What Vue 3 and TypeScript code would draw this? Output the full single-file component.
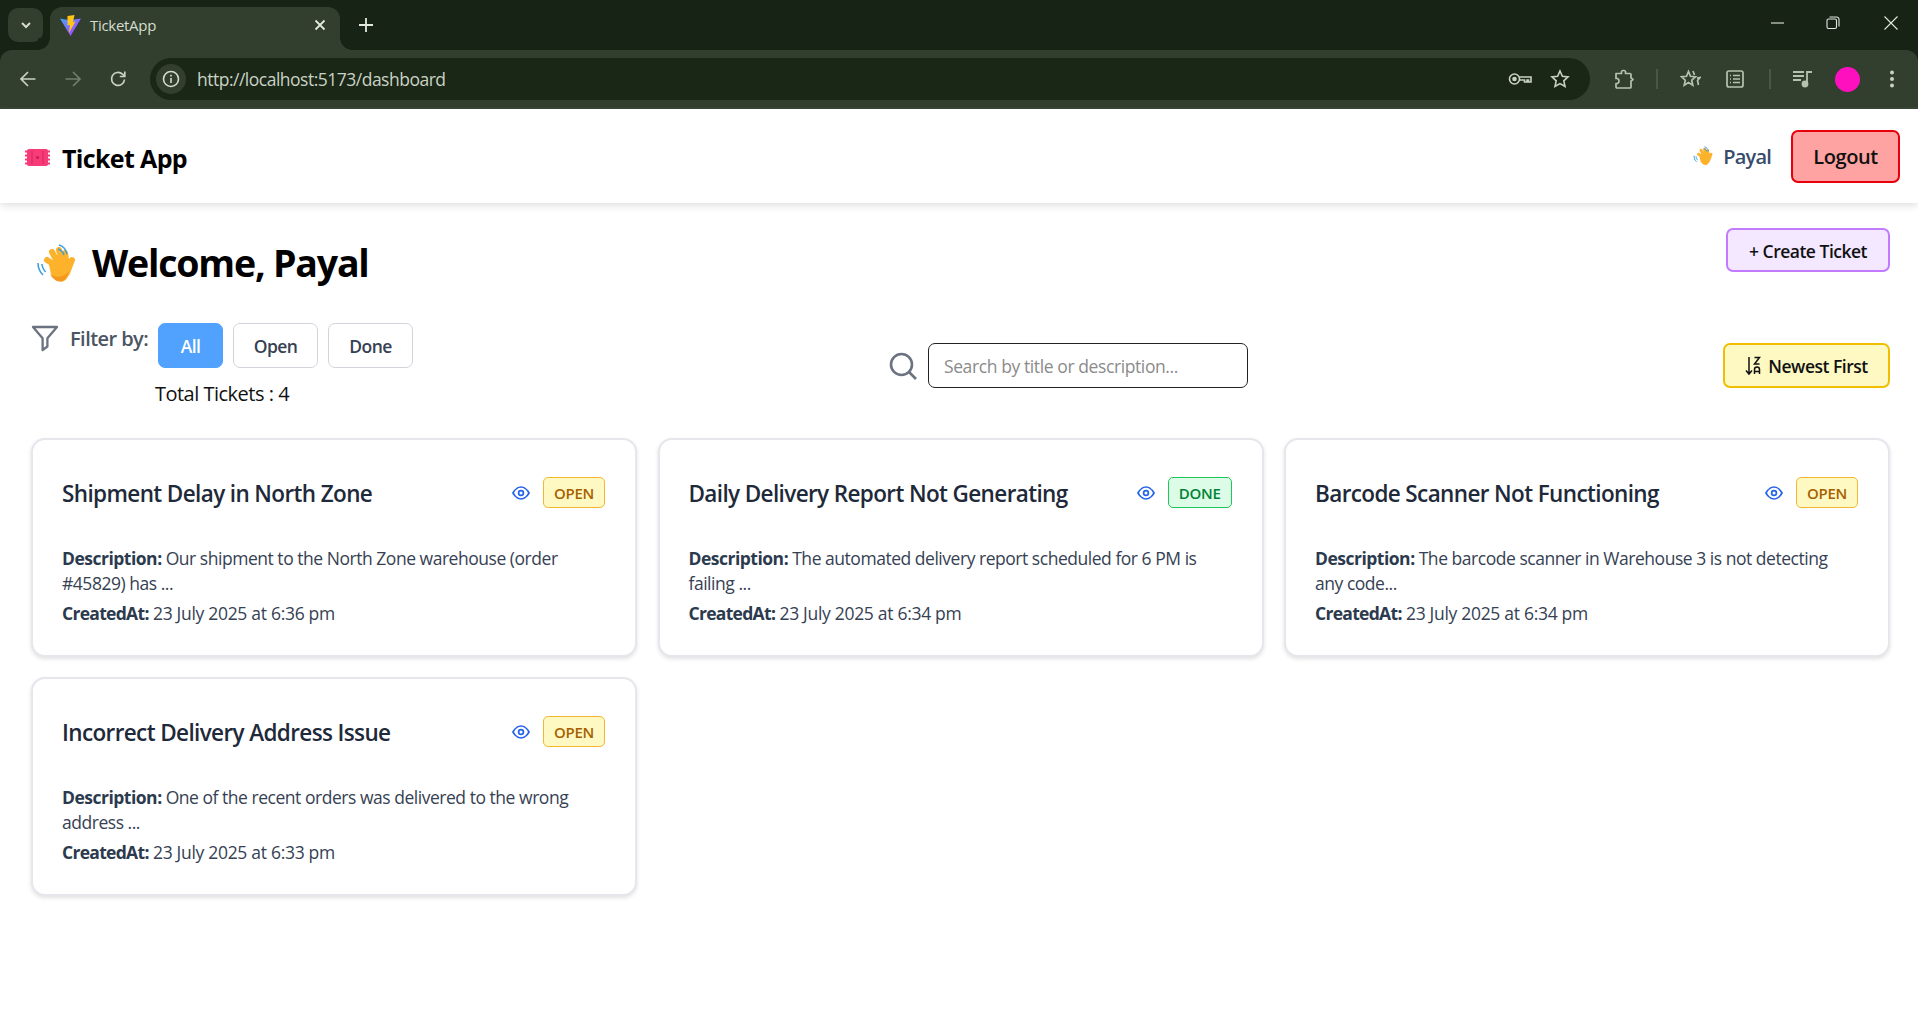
<script setup lang="ts">
interface Ticket {
  title: string
  status: 'OPEN' | 'DONE'
  description: string
  createdAt: string
}

const tickets: Ticket[] = [
  {
    title: 'Shipment Delay in North Zone',
    status: 'OPEN',
    description: 'Our shipment to the North Zone warehouse (order #45829) has ...',
    createdAt: '23 July 2025 at 6:36 pm',
  },
  {
    title: 'Daily Delivery Report Not Generating',
    status: 'DONE',
    description: 'The automated delivery report scheduled for 6 PM is failing ...',
    createdAt: '23 July 2025 at 6:34 pm',
  },
  {
    title: 'Barcode Scanner Not Functioning',
    status: 'OPEN',
    description: 'The barcode scanner in Warehouse 3 is not detecting any code...',
    createdAt: '23 July 2025 at 6:34 pm',
  },
  {
    title: 'Incorrect Delivery Address Issue',
    status: 'OPEN',
    description: 'One of the recent orders was delivered to the wrong address ...',
    createdAt: '23 July 2025 at 6:33 pm',
  },
]
</script>

<template>
  <div class="page">
    <div class="browser">
      <div class="strip">
        <span class="tab-list">
          <svg width="14" height="14" viewBox="0 0 14 14" fill="none" stroke="#d5dccf" stroke-width="2"><path d="M3 5l4 4 4-4" /></svg>
        </span>
        <div class="tab">
          <svg class="favicon" width="21" height="21" viewBox="0 0 21 21">
            <defs>
              <linearGradient id="vg" x1="0" y1="0" x2="1" y2="1">
                <stop offset="0" stop-color="#41a6ff" />
                <stop offset="1" stop-color="#bd34fe" />
              </linearGradient>
            </defs>
            <path d="M0 3.500l10.500 17.500L21 3.500l-7 1-3.500 .5L5 4.500z" fill="url(#vg)" />
            <path d="M7.500 1l7-1-1.500 7 2.500-.5L9 18l1-8-2.500.5z" fill="#ffc517" />
          </svg>
          <span class="tab-title">TicketApp</span>
          <svg class="tab-close" width="12" height="12" viewBox="0 0 12 12" stroke="#e3e8df" stroke-width="1.800"><path d="M1.500 1.500l9 9M10.500 1.500l-9 9" /></svg>
        </div>
        <svg class="new-tab" width="14" height="14" viewBox="0 0 14 14" stroke="#e3e8df" stroke-width="1.800"><path d="M7 0v14M0 7h14" /></svg>
        <div class="win">
          <svg class="win-min" width="14" height="14" viewBox="0 0 14 14" stroke="#e3e8df" stroke-width="1.100" fill="none"><path d="M0 7h13" /></svg>
          <svg class="win-max" width="14" height="14" viewBox="0 0 14 14" stroke="#e3e8df" stroke-width="1.100" fill="none"><rect x="1" y="3" width="9.500" height="9.500" rx="1.500" /><path d="M3.500 1h7A2.500 2.500 0 0 1 13 3.500v7" /></svg>
          <svg class="win-close" width="14" height="14" viewBox="0 0 14 14" stroke="#e3e8df" stroke-width="1.100" fill="none"><path d="M.5.5l13 13M13.500.5l-13 13" /></svg>
        </div>
      </div>
      <div class="toolbar">
        <svg class="nav nav-back" width="18" height="18" viewBox="0 0 18 18" fill="none" stroke="#c9d2c4" stroke-width="1.700"><path d="M16.500 9H2M9 2 2 9l7 7" /></svg>
        <svg class="nav nav-fwd" width="18" height="18" viewBox="0 0 18 18" fill="none" stroke="#727d6d" stroke-width="1.700"><path d="M1.500 9H16M9 2l7 7-7 7" /></svg>
        <svg class="nav nav-reload" width="18" height="18" viewBox="0 0 18 18" fill="none" stroke="#c9d2c4" stroke-width="1.700"><path d="M15.500 9.500a6.500 6.500 0 1 1-2-5.300L15.500 6" /><path d="M15.800 1.500V6.500H10.800" /></svg>
        <div class="address">
          <span class="info">
            <svg width="18" height="18" viewBox="0 0 18 18" fill="none" stroke="#d5dccf" stroke-width="1.600"><circle cx="9" cy="9" r="7.500" /><path d="M9 8v5M9 4.800v1.600" /></svg>
          </span>
          <span class="url">http://localhost:5173/dashboard</span>
          <svg class="addr-key" width="24" height="16" viewBox="0 0 24 16" fill="none" stroke="#c9d2c4" stroke-width="1.600"><circle cx="6.500" cy="8" r="5" /><circle cx="6.500" cy="8" r="1.500" fill="#c9d2c4" /><path d="M11.500 6h11.500v5h-2.500V9h-1.500v2h-2.500V9h-4.500" /></svg>
          <svg class="addr-star" width="20" height="20" viewBox="0 0 20 20" fill="none" stroke="#c9d2c4" stroke-width="1.600"><path d="M10 2l2.400 5.300 5.600.6-4.200 3.900 1.200 5.700L10 14.600l-5 2.900 1.200-5.700L2 7.900l5.600-.6z" /></svg>
        </div>
        <svg class="t-puzzle" width="21" height="21" viewBox="0 0 21 21" fill="none" stroke="#b5c3ae" stroke-width="1.700" stroke-linejoin="round"><path d="M2 4.500h5.500V2.500a1.500 1.500 0 0 1 1.500-1h1a1.500 1.500 0 0 1 1.500 1v2h4.500a1 1 0 0 1 1 1V9l2 1.500-2 1.500v6a1 1 0 0 1-1 1H3a1 1 0 0 1-1-1v-3.500h1.500a2.800 2.800 0 0 0 0-5H2z" /></svg>
        <span class="t-sep sep-a"></span>
        <svg class="t-favs" width="21" height="20" viewBox="0 0 21 20" fill="none" stroke="#b5c3ae" stroke-width="1.700"><path d="M8.500 2.500l2 4.800 5 .5-3.800 3.400 1.100 5-4.300-2.600-4.300 2.600 1.100-5L1.500 7.800l5-.5z" /><path d="M13 2l1.500 4M17 9l3-.5-2.500 3 1 4.500" /></svg>
        <svg class="t-list" width="18" height="18" viewBox="0 0 18 18" fill="none" stroke="#b5c3ae" stroke-width="1.700"><rect x="1" y="1" width="16" height="16" rx="2" /><path d="M7 5.500h7M7 9h7M7 12.500h7M4 5.500h1M4 9h1M4 12.500h1" /></svg>
        <span class="t-sep sep-b"></span>
        <svg class="t-music" width="20" height="18" viewBox="0 0 20 18" fill="none" stroke="#b5c3ae" stroke-width="1.800"><path d="M0 2h11M0 6h11M0 10h8M14 14V2h5" /><circle cx="12" cy="14" r="2.500" fill="#b5c3ae" /></svg>
        <span class="avatar"></span>
        <svg class="t-dots" width="6" height="18" viewBox="0 0 6 18" fill="#c9d2c4"><circle cx="3" cy="2.500" r="2" /><circle cx="3" cy="9" r="2" /><circle cx="3" cy="15.500" r="2" /></svg>
      </div>
    </div>

    <header class="app-header">
      <div class="brand">
        <svg class="ticket-icon" width="25" height="17" viewBox="0 0 25 17">
          <rect x="2" y="0" width="21" height="17" rx="2" fill="#f73b78" />
          <path d="M0 2.500h25M0 6.500h25M0 10.500h25M0 14.500h25" stroke="#f73b78" stroke-width="2.200" />
          <path d="M7 2v13M18 2v13" stroke="#d92c60" stroke-width="1.200" />
          <circle cx="12.500" cy="8.500" r="1.600" fill="#c4234f" />
        </svg>
        <span class="brand-name">Ticket App</span>
      </div>
      <div class="user">
        <svg width="21" height="20" viewBox="6 7 42 39" aria-hidden="true">
          <g stroke="#fdb22c" stroke-width="6" stroke-linecap="round">
            <path d="M30 30 19 23M31 28 24 15M35 27 31 13M39 28 37 16M39 36 44 23" />
          </g>
          <path d="M21 28c5-6 14-6 20-2 2 8 0 15-5 18-6 2-10-2-13-7z" fill="#fdb22c" />
          <path d="M10 26c0 5 2 9 5 12M14 27c0 3 2 6 3.500 8M31 8c4 1 7 5 8 9M30 12c3 1 5 3 6 6" fill="none" stroke="#3b9fe0" stroke-width="2" />
        </svg>
        <span class="user-name">Payal</span>
        <button class="logout" type="button">Logout</button>
      </div>
    </header>

    <main class="main">
      <div class="top-row">
        <h1 class="welcome">
          <svg class="hand-big" width="42" height="39" viewBox="6 7 42 39" aria-hidden="true">
            <g stroke="#fdb22c" stroke-width="6" stroke-linecap="round">
              <path d="M30 30 19 23M31 28 24 15M35 27 31 13M39 28 37 16M39 36 44 23" />
            </g>
            <path d="M21 28c5-6 14-6 20-2 2 8 0 15-5 18-6 2-10-2-13-7z" fill="#fdb22c" />
            <path d="M35 44c-6 2-10-2-13-7 6 4 14 4 19-3-1 4-3 8-6 10z" fill="#f39a1e" />
            <path d="M10 26c0 5 2 9 5 12M14 27c0 3 2 6 3.500 8M31 8c4 1 7 5 8 9M30 12c3 1 5 3 6 6" fill="none" stroke="#3b9fe0" stroke-width="1.500" />
          </svg>
          <span class="welcome-text">Welcome, Payal</span>
        </h1>
        <button class="create" type="button">+ Create Ticket</button>
      </div>

      <div class="controls">
        <div class="filter-block">
          <div class="filter-row">
            <svg class="filter-icon" width="28" height="27" viewBox="0 0 28 27" fill="none" stroke="#6b7280" stroke-width="2.300" stroke-linejoin="round"><path d="M2 2h24l-9.600 11.300v8.200L11.600 25V13.300z" /></svg>
            <span class="filter-label">Filter by:</span>
            <button class="chip chip-on" type="button">All</button>
            <button class="chip" type="button">Open</button>
            <button class="chip" type="button">Done</button>
          </div>
          <p class="total">Total Tickets : 4</p>
        </div>
        <div class="search">
          <svg width="30" height="30" viewBox="0 0 30 30" fill="none" stroke="#6b7280" stroke-width="2.600"><circle cx="13.500" cy="13.500" r="10.500" /><path d="M21 21l7 7" /></svg>
          <input class="search-input" type="text" placeholder="Search by title or description..." />
        </div>
        <button class="sort" type="button">
          <svg width="16" height="20" viewBox="0 0 16 20" fill="none" stroke="#111" stroke-width="1.500"><path d="M4 1v17M1 14.500 4 18l3-3.500" /><path d="M9.500 1.500h5L9.500 8h5" /><path d="M9.500 18v-4.500a2.500 2.500 0 0 1 5 0V18M9.500 15.500h5" /></svg>
          <span>Newest First</span>
        </button>
      </div>

      <section class="grid">
        <article v-for="t in tickets" :key="t.title" class="card">
          <div class="card-head">
            <h2 class="card-title">{{ t.title }}</h2>
            <div class="card-tools">
              <svg width="18" height="14" viewBox="0 0 18 14" fill="none" stroke="#2563eb" stroke-width="1.700"><path d="M1 7s3-6 8-6 8 6 8 6-3 6-8 6-8-6-8-6z" /><circle cx="9" cy="7" r="2.400" /></svg>
              <span class="badge" :class="t.status === 'OPEN' ? 'badge-open' : 'badge-done'">{{ t.status }}</span>
            </div>
          </div>
          <p class="desc"><strong>Description:</strong> {{ t.description }}</p>
          <p class="created"><strong>CreatedAt:</strong> {{ t.createdAt }}</p>
        </article>
      </section>
    </main>
  </div>
</template>

<style>
html,
body {
  margin: 0;
  background: #fff;
}
</style>

<style scoped>
.page {
  width: 1918px;
  min-height: 1016px;
  background: #fff;
  font-family: 'Open Sans', 'Noto Sans', sans-serif;
  color: #111;
  overflow: hidden;
}
button {
  font-family: inherit;
  cursor: pointer;
}

/* browser chrome */
.browser {
  height: 109px;
  background: #172314;
}
.strip {
  height: 50px;
  display: flex;
  align-items: flex-start;
}
.tab-list {
  margin: 8px 0 0 8px;
  width: 35px;
  height: 34px;
  border-radius: 10px;
  background: #323e2e;
  display: flex;
  align-items: center;
  justify-content: center;
}
.tab {
  position: relative;
  margin: 7px 0 0 7px;
  width: 290px;
  height: 43px;
  background: #323e2e;
  border-radius: 12px 12px 0 0;
  display: flex;
  align-items: center;
  padding-bottom: 7px;
  box-sizing: border-box;
}
.tab::before,
.tab::after {
  content: '';
  position: absolute;
  bottom: 0;
  width: 12px;
  height: 12px;
}
.tab::before {
  left: -12px;
  background: radial-gradient(circle at 0 0, #172314 11.500px, #323e2e 12px);
}
.tab::after {
  right: -12px;
  background: radial-gradient(circle at 100% 0, #172314 11.500px, #323e2e 12px);
}
.favicon {
  margin-left: 10px;
  flex: none;
}
.tab-title {
  margin-left: 9px;
  font-size: 15px;
  letter-spacing: -0.3px;
  color: #d5dccf;
}
.tab-close {
  margin-left: auto;
  margin-right: 14px;
}
.new-tab {
  margin: 18px 0 0 19px;
}
.win {
  margin-left: auto;
  margin-top: 16px;
  display: flex;
  padding-right: 20px;
}
.win-max {
  margin-left: 41px;
}
.win-close {
  margin-left: 44px;
}
.toolbar {
  height: 59px;
  box-sizing: border-box;
  background: #323e2e;
  border-radius: 12px 12px 0 0;
  display: flex;
  align-items: center;
  padding-top: 1px;
  border-bottom: 2px solid #3a4636;
}
.nav {
  flex: none;
}
.nav-back {
  margin-left: 19px;
}
.nav-fwd {
  margin-left: 27px;
}
.nav-reload {
  margin-left: 27px;
}
.address {
  margin-left: 23px;
  width: 1440px;
  height: 42px;
  background: #1a2616;
  border-radius: 21px;
  display: flex;
  align-items: center;
  flex: none;
}
.info {
  margin-left: 6px;
  width: 30px;
  height: 30px;
  border-radius: 50%;
  background: #323e2e;
  display: flex;
  align-items: center;
  justify-content: center;
}
.url {
  margin-left: 11px;
  font-size: 17.500px;
  letter-spacing: -0.5px;
  color: #c9d2c4;
}
.addr-key {
  margin-left: auto;
}
.addr-star {
  margin-left: 18px;
  margin-right: 20px;
}
.t-puzzle {
  margin-left: 24px;
  flex: none;
}
.t-sep {
  width: 2px;
  height: 20px;
  background: #4a5646;
  flex: none;
}
.sep-a {
  margin-left: 21px;
}
.t-favs {
  margin-left: 22px;
  flex: none;
}
.t-list {
  margin-left: 25px;
  flex: none;
}
.sep-b {
  margin-left: 25px;
}
.t-music {
  margin-left: 22px;
  flex: none;
}
.avatar {
  margin-left: 22px;
  width: 25px;
  height: 25px;
  border-radius: 50%;
  background: #ff10be;
  flex: none;
}
.t-dots {
  margin-left: 29px;
  flex: none;
}

/* app header */
.app-header {
  position: relative;
  height: 94px;
  box-sizing: border-box;
  display: flex;
  align-items: center;
  justify-content: space-between;
  padding: 0 18px 0 25px;
  background: #fff;
  box-shadow: 0 2px 8px rgba(0, 0, 0, 0.14);
}
.brand {
  display: flex;
  align-items: center;
  gap: 12px;
}
.ticket-icon {
  margin-top: 3px;
}
.brand-name {
  margin-top: 3px;
  font-size: 25px;
  font-weight: 700;
  letter-spacing: -0.65px;
  color: #000;
}
.user {
  display: flex;
  align-items: center;
}
.user-name {
  margin-left: 10px;
  font-size: 20px;
  font-weight: 600;
  letter-spacing: -0.8px;
  color: #374b6b;
}
.logout {
  margin-left: 20px;
  width: 109px;
  height: 53px;
  box-sizing: border-box;
  border: 2px solid #e7000b;
  border-radius: 7px;
  background: #ffa2a2;
  color: #111;
  font-size: 20px;
  font-weight: 600;
  letter-spacing: -0.45px;
  padding: 0;
}

/* main */
.main {
  padding: 25px 28px 0 31px;
}
.top-row {
  display: flex;
  justify-content: space-between;
  align-items: flex-start;
  margin-bottom: 38px;
}
.welcome {
  margin: 13px 0 0;
  height: 44px;
  display: flex;
  align-items: center;
  gap: 16px;
  font-size: 37.500px;
  font-weight: 700;
  letter-spacing: -1.2px;
  color: #000;
}
.welcome-text {
  margin-top: -2px;
}
.hand-big {
  margin-left: 3px;
}
.create {
  width: 164px;
  height: 44px;
  box-sizing: border-box;
  border: 2px solid #c27aff;
  border-radius: 7px;
  background: #f3e8ff;
  color: #111;
  font-size: 17.500px;
  font-weight: 600;
  letter-spacing: -0.5px;
  padding: 2px 0 0;
}
.controls {
  display: flex;
  justify-content: space-between;
  align-items: center;
  margin-bottom: 30px;
}
.filter-block {
  width: 382px;
  min-height: 85px;
  text-align: center;
}
.filter-row {
  display: flex;
  align-items: flex-start;
}
.filter-icon {
  margin-top: 2px;
  flex: none;
}
.filter-label {
  margin: 2px 10px 0 11px;
  width: 78px;
  line-height: 27px;
  font-size: 20px;
  font-weight: 600;
  letter-spacing: -0.55px;
  color: #4b5563;
  white-space: nowrap;
  text-align: left;
}
.chip {
  width: 85px;
  height: 45px;
  margin-left: 10px;
  padding: 0;
  box-sizing: border-box;
  border: 1.500px solid #d1d5db;
  border-radius: 7px;
  background: #fff;
  color: #364153;
  font-size: 17.500px;
  font-weight: 600;
  letter-spacing: -0.6px;
}
.chip-on {
  width: 65px;
  margin-left: 0;
  background: #51a2ff;
  border-color: #51a2ff;
  color: #fff;
}
.total {
  margin: 13px 0 0;
  font-size: 20px;
  line-height: 25px;
  letter-spacing: -0.5px;
  color: #111;
}
.search {
  display: flex;
  align-items: center;
  gap: 10px;
}
.search svg {
  flex: none;
}
.search-input {
  width: 320px;
  height: 45px;
  box-sizing: border-box;
  border: 1.500px solid #222;
  border-radius: 7px;
  padding: 0 15px;
  font-family: inherit;
  font-size: 17.500px;
  letter-spacing: -0.4px;
  color: #111;
  outline: none;
  background: #fff;
}
.search-input::placeholder {
  color: #8b8b8b;
  opacity: 1;
}
.sort {
  width: 167px;
  height: 45px;
  box-sizing: border-box;
  border: 2px solid #f0c000;
  border-radius: 7px;
  background: #fef9c2;
  color: #111;
  font-size: 17.500px;
  font-weight: 600;
  letter-spacing: -0.5px;
  padding: 0;
  display: flex;
  align-items: center;
  justify-content: center;
  gap: 7px;
}
.grid {
  display: grid;
  grid-template-columns: repeat(3, 606px);
  gap: 20px 20.500px;
}
.card {
  height: 219px;
  box-sizing: border-box;
  padding: 37px 30px 0 29px;
  background: #fff;
  border: 2px solid #e6e6ec;
  border-radius: 14px;
  box-shadow: 0 2px 4px rgba(0, 0, 0, 0.12);
}
.card-head {
  height: 31px;
  display: flex;
  align-items: center;
  justify-content: space-between;
  margin-bottom: 38px;
}
.card-title {
  margin: 1px 0 0;
  font-size: 22.500px;
  font-weight: 600;
  letter-spacing: -0.62px;
  color: #1e2939;
}
.card-tools {
  display: flex;
  align-items: center;
  gap: 13px;
}
.badge {
  height: 31px;
  box-sizing: border-box;
  padding: 0 10px;
  display: flex;
  align-items: center;
  border-radius: 5px;
  border: 1.500px solid;
  font-size: 15px;
  font-weight: 600;
  letter-spacing: -0.3px;
}
.badge-open {
  background: #fef9c2;
  border-color: #f5b731;
  color: #a65f00;
}
.badge-done {
  background: #dcfce7;
  border-color: #22c55e;
  color: #008236;
}
.desc,
.created {
  margin: 0;
  font-size: 17.500px;
  line-height: 25px;
  letter-spacing: -0.47px;
  color: #364153;
}
.desc {
  margin-top: -0.5px;
  height: 50px;
  padding-right: 5px;
}
.desc strong {
  letter-spacing: -0.5px;
}
.created {
  margin-top: 5px;
  letter-spacing: -0.3px;
}
.created strong {
  letter-spacing: -0.7px;
}
strong {
  font-weight: 700;
  color: #2c3a4e;
}
</style>
